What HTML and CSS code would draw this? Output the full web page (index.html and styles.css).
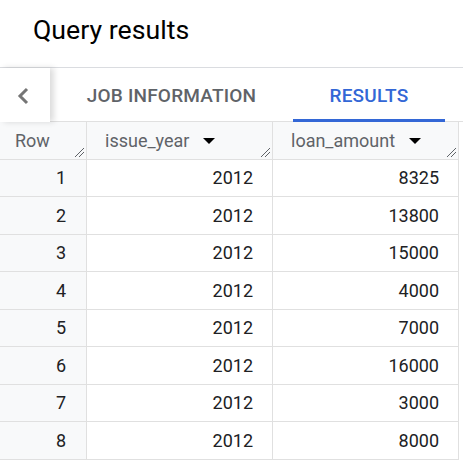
FILE: index.html
```html
<!DOCTYPE html>
<html>
<head>
<meta charset="utf-8">
<link rel="stylesheet" href="styles.css">
</head>
<body>
<div class="page">
  <div class="title">Query results</div>
  <div class="tabs">
    <div class="back">
      <svg width="16" height="20" viewBox="0 0 16 20"><path d="M12 3 L5 10 L12 17" fill="none" stroke="#757575" stroke-width="3"/></svg>
    </div>
    <div class="tab tab-job">JOB INFORMATION</div>
    <div class="tab tab-results active">RESULTS</div>
  </div>
  <div class="grid">
    <div class="cell head rowcol">Row<span class="grip"></span></div>
    <div class="cell head">issue_year<span class="caret"></span><span class="grip"></span></div>
    <div class="cell head">loan_amount<span class="caret"></span><span class="grip"></span></div>

    <div class="cell num rowcol">1</div><div class="cell num">2012</div><div class="cell num">8325</div>
    <div class="cell num rowcol">2</div><div class="cell num">2012</div><div class="cell num">13800</div>
    <div class="cell num rowcol">3</div><div class="cell num">2012</div><div class="cell num">15000</div>
    <div class="cell num rowcol">4</div><div class="cell num">2012</div><div class="cell num">4000</div>
    <div class="cell num rowcol">5</div><div class="cell num">2012</div><div class="cell num">7000</div>
    <div class="cell num rowcol">6</div><div class="cell num">2012</div><div class="cell num">16000</div>
    <div class="cell num rowcol">7</div><div class="cell num">2012</div><div class="cell num">3000</div>
    <div class="cell num rowcol">8</div><div class="cell num">2012</div><div class="cell num">8000</div>
  </div>
</div>
</body>
</html>
```
FILE: styles.css
```css
html, body {
  margin: 0;
  padding: 0;
  background: #ffffff;
}
body {
  font-family: Roboto, "Liberation Sans", Arial, sans-serif;
  color: #202124;
  overflow: hidden;
}
.page {
  width: 463px;
  height: 463px;
  overflow: hidden;
}
.title {
  height: 67px;
  box-sizing: border-box;
  padding-left: 33px;
  padding-top: 13px;
  font-size: 26.7px;
  line-height: 34px;
  color: #000000;
}
.tabs {
  display: flex;
  height: 55px;
  border-top: 1px solid #dadce0;
  box-sizing: border-box;
}
.back {
  width: 50px;
  display: flex;
  align-items: center;
  justify-content: center;
  position: relative;
  box-shadow: 4px 0 6px rgba(0, 0, 0, 0.14);
  background: #fff;
  z-index: 1;
}
.back svg {
  margin-left: -4px;
  margin-top: 2px;
}
.tab {
  display: flex;
  align-items: center;
  justify-content: center;
  font-size: 19px;
  font-weight: 500;
  color: #5f6368;
  letter-spacing: 0.2px;
  box-sizing: border-box;
  border-bottom: 3px solid transparent;
  padding-top: 3px;
}
.tab-job {
  width: 243px;
}
.tab-results {
  width: 152px;
}
.tab.active {
  color: #3367d6;
  border-bottom-color: #3367d6;
}
.grid {
  display: grid;
  grid-template-columns: 87px 186px 186px;
  grid-auto-rows: 37.5px;
  border-top: 1px solid #e0e0e0;
  margin-top: -1px;
}
.cell {
  border-right: 1px solid #e0e0e0;
  border-bottom: 1px solid #e0e0e0;
  box-sizing: border-box;
  font-size: 18px;
  display: flex;
  align-items: center;
  position: relative;
}
.head {
  background: #f8f9fa;
  color: #5f6368;
  padding-left: 18px;
}
.head.rowcol {
  padding-left: 15px;
}
.rowcol {
  background: #f8f9fa;
}
.num {
  justify-content: flex-end;
  padding-right: 19px;
  color: #202124;
}
.num.rowcol {
  padding-right: 20px;
}
.caret {
  width: 0;
  height: 0;
  border-left: 6px solid transparent;
  border-right: 6px solid transparent;
  border-top: 6px solid #000000;
  margin-left: 14px;
  margin-top: 1px;
}
.grip {
  position: absolute;
  right: 2px;
  bottom: 2px;
  width: 9px;
  height: 9px;
  background:
    linear-gradient(135deg, transparent 45%, #5f6368 45%, #5f6368 55%, transparent 55%) no-repeat,
    linear-gradient(135deg, transparent 45%, #5f6368 45%, #5f6368 55%, transparent 55%) no-repeat;
  background-size: 9px 9px, 5px 5px;
  background-position: 0 0, 4px 4px;
}
```
